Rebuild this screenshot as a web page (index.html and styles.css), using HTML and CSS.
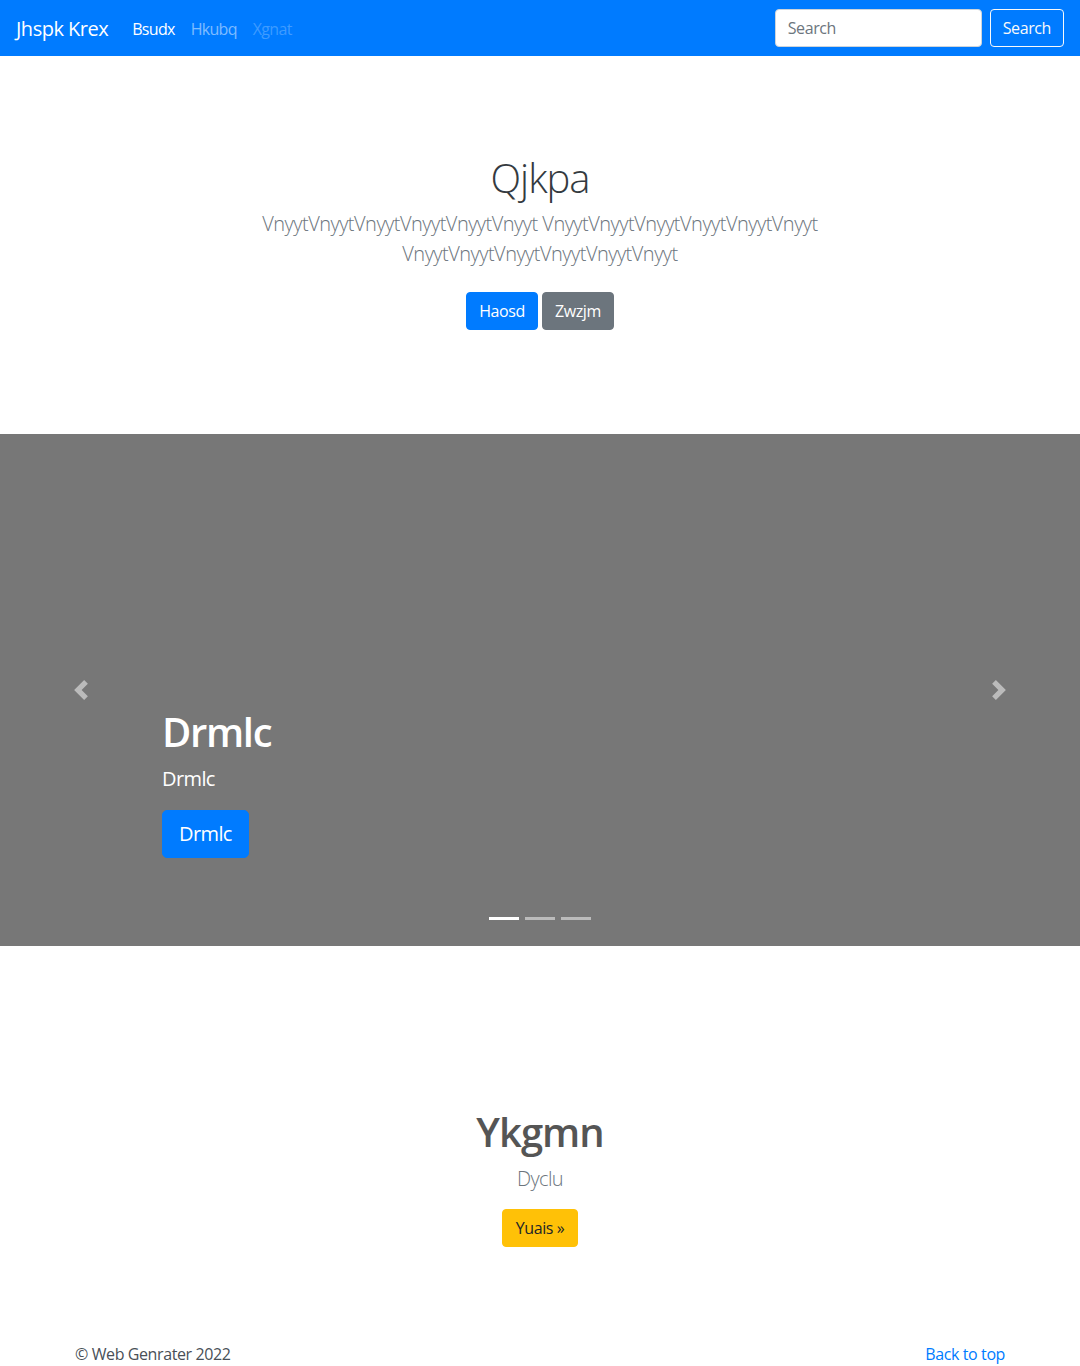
FILE: index.html
```html
<!DOCTYPE html>
<html lang="en">
<head>
<meta charset="utf-8">
<title>Jhspk Krex</title>
<link rel="stylesheet" href="styles.css">
</head>
<body>
<header class="navbar">
  <a class="brand" href="#">Jhspk Krex</a>
  <nav class="nav">
    <a class="nav-link active" href="#">Bsudx</a>
    <a class="nav-link" href="#">Hkubq</a>
    <a class="nav-link disabled" href="#">Xgnat</a>
  </nav>
  <form class="search-form">
    <input class="search-input" type="text" placeholder="Search">
    <button class="btn btn-outline-light" type="button">Search</button>
  </form>
</header>

<section class="jumbotron">
  <div class="jumbo-inner">
    <h1 class="jumbo-title">Qjkpa</h1>
    <p class="lead">VnyytVnyytVnyytVnyytVnyytVnyyt VnyytVnyytVnyytVnyytVnyytVnyyt VnyytVnyytVnyytVnyytVnyytVnyyt</p>
    <div class="jumbo-actions">
      <a class="btn btn-primary" href="#">Haosd</a>
      <a class="btn btn-secondary" href="#">Zwzjm</a>
    </div>
  </div>
</section>

<section class="carousel">
  <a class="carousel-control prev" href="#" aria-label="Previous">
    <svg width="20" height="20" viewBox="0 0 8 8" fill="#fff"><path d="M5.25 0l-4 4 4 4 1.5-1.5L4.25 4l2.5-2.5L5.25 0z"/></svg>
  </a>
  <a class="carousel-control next" href="#" aria-label="Next">
    <svg width="20" height="20" viewBox="0 0 8 8" fill="#fff"><path d="M2.75 0l-1.5 1.5L3.75 4l-2.5 2.5L2.75 8l4-4-4-4z"/></svg>
  </a>
  <div class="carousel-caption">
    <h1 class="caption-title">Drmlc</h1>
    <p class="caption-text">Drmlc</p>
    <a class="btn btn-primary btn-lg" href="#">Drmlc</a>
  </div>
  <ol class="indicators">
    <li class="indicator active"></li>
    <li class="indicator"></li>
    <li class="indicator"></li>
  </ol>
</section>

<section class="feature">
  <h1 class="feature-title">Ykgmn</h1>
  <p class="feature-lead">Dyclu</p>
  <a class="btn btn-warning" href="#">Yuais &raquo;</a>
</section>

<footer class="footer">
  <p>&copy; Web Genrater 2022</p>
  <a class="back-top" href="#">Back to top</a>
</footer>
</body>
</html>
```

FILE: styles.css
```css
* { box-sizing: border-box; }

body {
  margin: 0;
  font-family: "Open Sans", "Noto Sans", sans-serif;
  font-size: 16px;
  line-height: 1.5;
  color: #212529;
  background: #fff;
}

a { text-decoration: none; }

.navbar {
  display: flex;
  align-items: center;
  height: 56px;
  padding: 9px 16px 7px;
  background: #007bff;
}

.brand {
  color: #fff;
  font-size: 20px;
  line-height: 30px;
  margin-right: 16px;
  letter-spacing: -0.5px;
}

.nav {
  display: flex;
  flex: 1;
}

.nav-link {
  padding: 8px;
  color: rgba(255, 255, 255, 0.5);
  letter-spacing: -0.7px;
}
.nav-link.active { color: #fff; }
.nav-link.disabled { color: rgba(255, 255, 255, 0.25); }

.search-form {
  display: flex;
  align-items: center;
  margin-top: -2px;
}

.search-input {
  width: 207px;
  height: 38px;
  margin-right: 8px;
  padding: 6px 12px;
  border: 1px solid #ced4da;
  border-radius: 4px;
  font-family: inherit;
  font-size: 16px;
  color: #495057;
  letter-spacing: -0.4px;
}
.search-input::placeholder { color: #6c757d; }

.btn {
  display: inline-block;
  height: 38px;
  padding: 6px 12px;
  border: 1px solid transparent;
  border-radius: 4px;
  font-family: inherit;
  font-size: 16px;
  line-height: 24px;
  letter-spacing: -0.4px;
  text-align: center;
  cursor: pointer;
}

.btn-outline-light {
  background: transparent;
  color: #f8f9fa;
  border-color: #f8f9fa;
}
.btn-primary { background: #007bff; color: #fff; border-color: #007bff; }
.btn-secondary { background: #6c757d; color: #fff; border-color: #6c757d; }
.btn-warning { background: #ffc107; color: #212529; border-color: #ffc107; }
.btn-lg {
  height: 48px;
  padding: 8px 16px;
  font-size: 20px;
  line-height: 30px;
  border-radius: 5px;
  letter-spacing: -0.6px;
}

.jumbotron {
  padding: 96px 0;
  text-align: center;
}

.jumbo-inner {
  max-width: 620px;
  margin: 0 auto;
}

.jumbo-title {
  margin: 0 0 9px;
  font-size: 40px;
  line-height: 48px;
  font-weight: 300;
  color: #343a40;
  letter-spacing: -1px;
  position: relative;
  top: 2px;
}

.lead {
  margin: 0 0 16px;
  font-size: 20px;
  line-height: 30px;
  font-weight: 300;
  color: #6c757d;
  letter-spacing: -0.5px;
}

.jumbo-actions {
  display: flex;
  justify-content: center;
  gap: 4px;
  padding: 7px 0 8px;
}

.carousel {
  position: relative;
  height: 512px;
  background: #777;
}

.carousel-control {
  position: absolute;
  top: 0;
  bottom: 0;
  width: 15%;
  display: flex;
  align-items: center;
  justify-content: center;
  opacity: 0.5;
}
.carousel-control.prev { left: 0; }
.carousel-control.next { right: 0; }

.carousel-caption {
  position: absolute;
  left: 15%;
  right: 15%;
  bottom: 48px;
  padding: 20px 0 40px;
  color: #fff;
}

.caption-title {
  margin: 0 0 8px;
  font-size: 40px;
  line-height: 48px;
  font-weight: 600;
  letter-spacing: -1.3px;
}

.caption-text {
  margin: 0 0 16px;
  font-size: 20px;
  line-height: 30px;
  letter-spacing: -0.6px;
}

.indicators {
  position: absolute;
  left: 0;
  right: 0;
  bottom: 26px;
  display: flex;
  justify-content: center;
  gap: 6px;
  margin: 0;
  padding: 0;
  list-style: none;
}

.indicator {
  width: 30px;
  height: 3px;
  background: #fff;
  opacity: 0.5;
}
.indicator.active { opacity: 1; }

.feature {
  padding: 162px 0 0;
  text-align: center;
  height: 330px;
}

.feature-title {
  margin: 0 0 8px;
  font-size: 40px;
  line-height: 48px;
  font-weight: 600;
  color: #555;
  letter-spacing: -1px;
}

.feature-lead {
  margin: 0 0 15px;
  font-size: 20px;
  line-height: 30px;
  font-weight: 300;
  color: #6c757d;
  letter-spacing: -0.6px;
}

.feature .btn { padding-left: 13px; padding-right: 13px; }

.footer {
  display: flex;
  justify-content: space-between;
  max-width: 960px;
  margin: 0 auto;
  padding: 66px 15px 0;
  color: #495057;
  letter-spacing: -0.4px;
}

.footer p { margin: 0 0 16px; }

.back-top { color: #007bff; }
```
